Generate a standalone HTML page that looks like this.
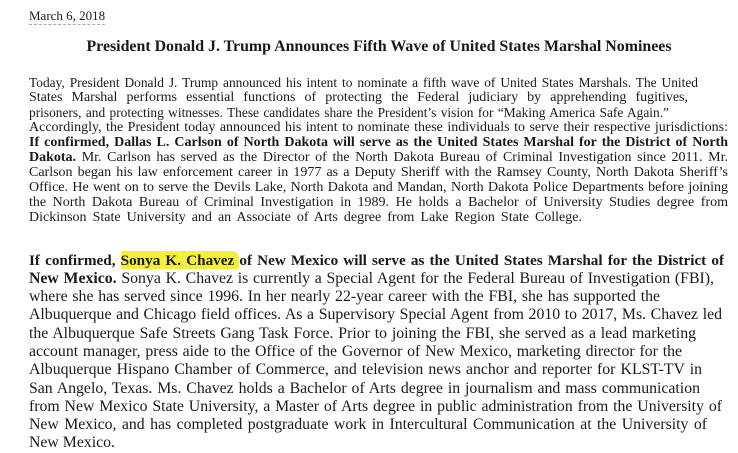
<!DOCTYPE html>
<html><head><meta charset="utf-8"><style>
body{margin:0;width:738px;height:440px;background:#fff;overflow:hidden;position:relative;font-family:"Liberation Serif",serif;color:#1a1a1a}
.l{position:absolute;left:29px;text-align:justify;text-align-last:justify;white-space:normal;overflow:hidden;height:20px}
.a{font-size:14px;line-height:15px;height:16px}
.b{font-size:15.8px;line-height:19px}
.hl{background:#f4f03a;border-radius:3px 8px 2px 2px;box-shadow:0 -2px 0 #f4f03a}
</style></head><body>
<div style="position:absolute;left:29px;top:-13px;font-size:14px;font-weight:bold;letter-spacing:1px;color:#333">FOR IMMEDIATE RELEASE</div>
<div style="position:absolute;left:29px;top:8px;font-size:13px;border-bottom:1px dashed #aaa;line-height:16px">March 6, 2018</div>
<div style="position:absolute;left:0;width:758px;top:38px;text-align:center;font-size:15.9px;font-weight:bold">President Donald J. Trump Announces Fifth Wave of United States Marshal Nominees</div>

<div class="l a" style="top:75px;width:669px;font-size:13.4px">Today, President Donald J. Trump announced his intent to nominate a fifth wave of United States Marshals. The United</div>
<div class="l a" style="top:90px;width:659px">States Marshal performs essential functions of protecting the Federal judiciary by apprehending fugitives, transporting</div>
<div class="l a" style="top:105px;width:640px;font-size:13.4px">prisoners, and protecting witnesses. These candidates share the President’s vision for “Making America Safe Again.”</div>
<div class="l a" style="top:120px;width:699px">Accordingly, the President today announced his intent to nominate these individuals to serve their respective jurisdictions:</div>
<div class="l a" style="top:135px;width:699px"><b>If confirmed, Dallas L. Carlson of North Dakota will serve as the United States Marshal for the District of North</b></div>
<div class="l a" style="top:150px;width:699px"><b>Dakota.</b> Mr. Carlson has served as the Director of the North Dakota Bureau of Criminal Investigation since 2011. Mr.</div>
<div class="l a" style="top:165px;width:699px">Carlson began his law enforcement career in 1977 as a Deputy Sheriff with the Ramsey County, North Dakota Sheriff’s</div>
<div class="l a" style="top:180px;width:699px">Office. He went on to serve the Devils Lake, North Dakota and Mandan, North Dakota Police Departments before joining</div>
<div class="l a" style="top:195px;width:699px">the North Dakota Bureau of Criminal Investigation in 1989. He holds a Bachelor of University Studies degree from</div>
<div class="l a" style="top:210px;width:553px">Dickinson State University and an Associate of Arts degree from Lake Region State College.</div>

<div class="l b" style="top:251px;width:695px;font-size:15.2px"><b>If confirmed, <span class="hl">Sonya K. Chavez </span>of New Mexico will serve as the United States Marshal for the District of</b></div>
<div class="l b" style="top:269px;width:685px"><b>New Mexico.</b> Sonya K. Chavez is currently a Special Agent for the Federal Bureau of Investigation (FBI),</div>
<div class="l b" style="top:287px;width:631px">where she has served since 1996. In her nearly 22-year career with the FBI, she has supported the</div>
<div class="l b" style="top:305px;width:693px">Albuquerque and Chicago field offices. As a Supervisory Special Agent from 2010 to 2017, Ms. Chavez led</div>
<div class="l b" style="top:324px;width:667px">the Albuquerque Safe Streets Gang Task Force. Prior to joining the FBI, she served as a lead marketing</div>
<div class="l b" style="top:342px;width:653px">account manager, press aide to the Office of the Governor of New Mexico, marketing director for the</div>
<div class="l b" style="top:360px;width:673px">Albuquerque Hispano Chamber of Commerce, and television news anchor and reporter for KLST-TV in</div>
<div class="l b" style="top:379px;width:671px">San Angelo, Texas. Ms. Chavez holds a Bachelor of Arts degree in journalism and mass communication</div>
<div class="l b" style="top:397px;width:693px">from New Mexico State University, a Master of Arts degree in public administration from the University of</div>
<div class="l b" style="top:415px;width:678px">New Mexico, and has completed postgraduate work in Intercultural Communication at the University of</div>
<div class="l b" style="top:433px;width:120px;text-align-last:left">New Mexico.</div>
</body></html>
